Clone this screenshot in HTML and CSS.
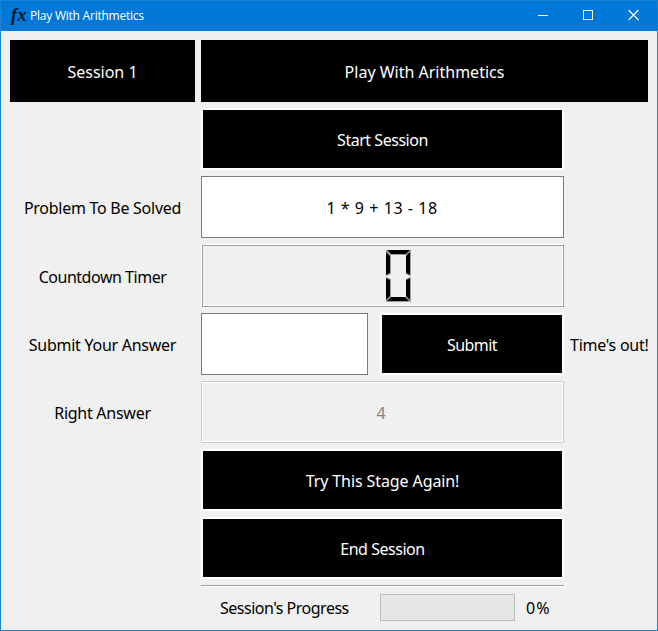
FILE: index.html
```html
<!DOCTYPE html>
<html lang="en">
<head>
<meta charset="utf-8">
<title>Play With Arithmetics</title>
<link rel="stylesheet" href="styles.css">
</head>
<body>
<div class="window">
  <header class="titlebar">
    <span class="app-icon">fx</span>
    <span class="title">Play With Arithmetics</span>
    <svg class="controls" width="137" height="30" viewBox="0 0 137 30" fill="none" stroke="#fff">
      <path d="M18 14.500h10M63.500 9.500h9v9h-9z" shape-rendering="crispEdges"/>
      <path d="M108.500 9l10 10M118.500 9l-10 10" stroke-width="1.100"/>
    </svg>
  </header>
  <main class="form">
    <div class="banner">Session 1</div>
    <div class="banner wide">Play With Arithmetics</div>
    <button class="button mid tight">Start Session</button>
    <div class="label snug">Problem To Be Solved</div>
    <div class="field mid expression">1 * 9 + 13 - 18</div>
    <div class="label tight">Countdown Timer</div>
    <div class="lcd mid">
      <svg width="26" height="54" viewBox="0 0 26 54">
        <path fill="#a0a0a0" d="M1 1h25l-5 5H6zM1 1l5 5v19l-5 2zM26 1v26l-5-2V6zM1 28l5 2v18l-5 5zM26 28v25l-5-5V30zM1 53l5-5h15l5 5z"/>
        <path fill="#000" d="M2 1h23l-4 4H6zM1 3l4 4v17l-4 2zM25 3v23l-4-2V7zM1 29l4 2v16l-4 4zM25 29v22l-4-4V31zM2 52l4-4h14l4 4z"/>
      </svg>
    </div>
    <div class="label snug">Submit Your Answer</div>
    <div class="mid pair">
      <input class="field" type="text" aria-label="Answer">
      <button class="button submit">Submit</button>
    </div>
    <div class="status snug">Time's out!</div>
    <div class="label snug">Right Answer</div>
    <div class="disabled mid">4</div>
    <button class="button mid again">Try This Stage Again!</button>
    <button class="button mid tight">End Session</button>
    <div class="rule mid"></div>
    <div class="progress mid">
      <span class="progress-label">Session's Progress</span>
      <span class="bar"></span>
      <span class="percent">0%</span>
    </div>
  </main>
</div>
</body>
</html>
```

FILE: styles.css
```css
* { box-sizing: border-box; }
body { margin: 0; background: #f0f0f0; font: 16px/20px "Noto Sans", sans-serif; color: #000; }
.window { width: 658px; height: 631px; border: 1px solid #1883d7; background: #f0f0f0; overflow: hidden; }
.titlebar { display: flex; align-items: center; height: 30px; background: #0078d7; color: #fff; }
.app-icon { width: 29px; padding: 0 0 3px 10px; color: #001426; font: italic bold 18px/20px "Liberation Serif", serif; letter-spacing: 0.5px; }
.title { flex: 1; font: 12px/16px "Open Sans", sans-serif; letter-spacing: -0.23px; }
.form {
  display: grid; grid-template-columns: 185px 363px 78px; column-gap: 6px; row-gap: 6px;
  grid-template-rows: 62px 62px 62px 63px 62px 62px 62px 62px 2px 27px;
  padding: 9px 9px 0;
}
.banner, .label, .button, .field, .lcd, .disabled { display: flex; align-items: center; justify-content: center; white-space: nowrap; }
.banner { background: #000; color: #fff; padding-top: 2px; }
.wide { grid-column: 2 / 4; }
.mid { grid-column: 2; }
.label { grid-column: 1; padding-top: 2px; }
.button { background: #000; border: 2px solid #fff; color: #fff; font: inherit; padding: 2px 0 0; border-radius: 0; }
.tight { letter-spacing: -0.47px; }
.snug { letter-spacing: -0.27px; }
.again { letter-spacing: -0.1px; }
.submit { letter-spacing: -0.6px; }
.field { background: #fff; border: 1px solid #7a7a7a; border-radius: 0; padding: 2px 0 0; text-align: center; font: inherit; }
.expression { letter-spacing: 0.55px; padding-right: 1px; }
.lcd { border: 1px solid; border-color: #fff #a0a0a0 #a0a0a0 #fff; box-shadow: inset 1px 1px #a0a0a0, inset -1px -1px #fff; padding-left: 31px; }
.pair { display: grid; grid-template-columns: 167px 184px; gap: 12px; }
.status { align-self: center; white-space: nowrap; padding-top: 2px; }
.disabled { border: 1px solid #ccc; box-shadow: inset 0 0 0 1px #fff; color: #838383; padding: 2px 3px 0 0; }
.rule { border-top: 1px solid #a0a0a0; border-bottom: 1px solid #fff; }
.progress { display: flex; align-items: center; margin-top: 1px; height: 27px; }
.progress-label { width: 179px; padding-left: 19px; white-space: nowrap; letter-spacing: -0.5px; }
.bar { width: 135px; height: 27px; background: #e6e6e6; border: 1px solid #bcbcbc; }
.percent { margin-left: 11px; letter-spacing: 1px; }
```
